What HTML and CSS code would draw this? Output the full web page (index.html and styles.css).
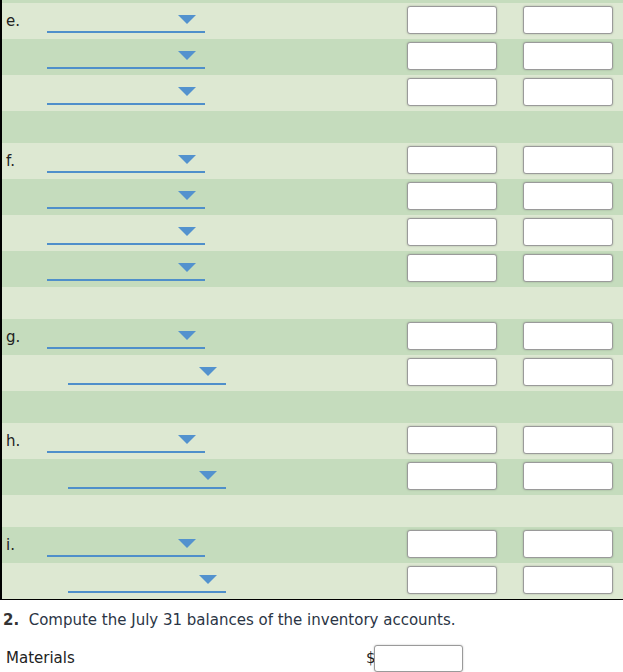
FILE: index.html
```html
<!DOCTYPE html>
<html>
<head>
<meta charset="utf-8">
<link rel="stylesheet" href="styles.css">
</head>
<body>
<div class="sheet">
  <div class="strip dark"></div>

  <div class="row light"><span class="label">e.</span><div class="dd"><span class="arrow"></span></div><div class="inputs"><span class="box"></span><span class="box"></span></div></div>
  <div class="row dark"><span class="label"></span><div class="dd"><span class="arrow"></span></div><div class="inputs"><span class="box"></span><span class="box"></span></div></div>
  <div class="row light"><span class="label"></span><div class="dd"><span class="arrow"></span></div><div class="inputs"><span class="box"></span><span class="box"></span></div></div>
  <div class="spacer dark"></div>

  <div class="row light"><span class="label">f.</span><div class="dd"><span class="arrow"></span></div><div class="inputs"><span class="box"></span><span class="box"></span></div></div>
  <div class="row dark"><span class="label"></span><div class="dd"><span class="arrow"></span></div><div class="inputs"><span class="box"></span><span class="box"></span></div></div>
  <div class="row light"><span class="label"></span><div class="dd"><span class="arrow"></span></div><div class="inputs"><span class="box"></span><span class="box"></span></div></div>
  <div class="row dark"><span class="label"></span><div class="dd"><span class="arrow"></span></div><div class="inputs"><span class="box"></span><span class="box"></span></div></div>
  <div class="spacer light"></div>

  <div class="row dark"><span class="label">g.</span><div class="dd"><span class="arrow"></span></div><div class="inputs"><span class="box"></span><span class="box"></span></div></div>
  <div class="row light"><span class="label"></span><div class="dd indent"><span class="arrow"></span></div><div class="inputs"><span class="box"></span><span class="box"></span></div></div>
  <div class="spacer dark"></div>

  <div class="row light"><span class="label">h.</span><div class="dd"><span class="arrow"></span></div><div class="inputs"><span class="box"></span><span class="box"></span></div></div>
  <div class="row dark"><span class="label"></span><div class="dd indent"><span class="arrow"></span></div><div class="inputs"><span class="box"></span><span class="box"></span></div></div>
  <div class="spacer light"></div>

  <div class="row dark"><span class="label">i.</span><div class="dd"><span class="arrow"></span></div><div class="inputs"><span class="box"></span><span class="box"></span></div></div>
  <div class="row light"><span class="label"></span><div class="dd indent"><span class="arrow"></span></div><div class="inputs"><span class="box"></span><span class="box"></span></div></div>
</div>

<p class="question"><b>2.</b>&nbsp; Compute the July 31 balances of the inventory accounts.</p>

<div class="answer">
  <span class="alabel">Materials</span>
  <span class="dollar">$</span><span class="box abox"></span>
</div>
</body>
</html>
```

FILE: styles.css
```css
html, body {
  margin: 0;
  padding: 0;
  background: #ffffff;
  font-family: "DejaVu Sans", Verdana, sans-serif;
  font-size: 15px;
  color: #222222;
}

.sheet {
  border-left: 2px solid #000000;
  border-bottom: 1px solid #000000;
  width: 621px;
}

.light { background: #dde8d2; }
.dark { background: #c5dcbd; }

.strip { height: 3px; }
.spacer { height: 32px; }

.row {
  height: 36px;
  display: flex;
  align-items: flex-start;
}

.label {
  width: 41px;
  padding-left: 4px;
  padding-top: 9px;
  line-height: 18px;
  flex: none;
}

.dd {
  position: relative;
  width: 158px;
  height: 28px;
  border-bottom: 2px solid #4f8fca;
  flex: none;
}

.dd.indent { margin-left: 21px; }

.arrow {
  position: absolute;
  left: 131px;
  top: 12px;
  width: 0;
  height: 0;
  border-left: 9px solid transparent;
  border-right: 9px solid transparent;
  border-top: 9px solid #5392ce;
}

.inputs {
  margin-left: auto;
  display: flex;
  gap: 26px;
  padding-top: 3px;
  padding-right: 10px;
}

.box {
  display: block;
  width: 88px;
  height: 26px;
  background: #ffffff;
  border: 1px solid #9a9a9a;
  border-radius: 3px;
  box-shadow: 0 0 2px rgba(0, 0, 0, 0.25);
}

.question {
  margin: 10px 0 0 3px;
  line-height: 20px;
  color: #2b3545;
}

.question b { color: #333333; }

.answer {
  display: flex;
  align-items: center;
  height: 28px;
  margin-top: 14px;
  padding-left: 6px;
}

.alabel {
  width: 360px;
}

.dollar {
  width: 8px;
}

.abox {
  width: 87px;
  height: 25px;
}
```
